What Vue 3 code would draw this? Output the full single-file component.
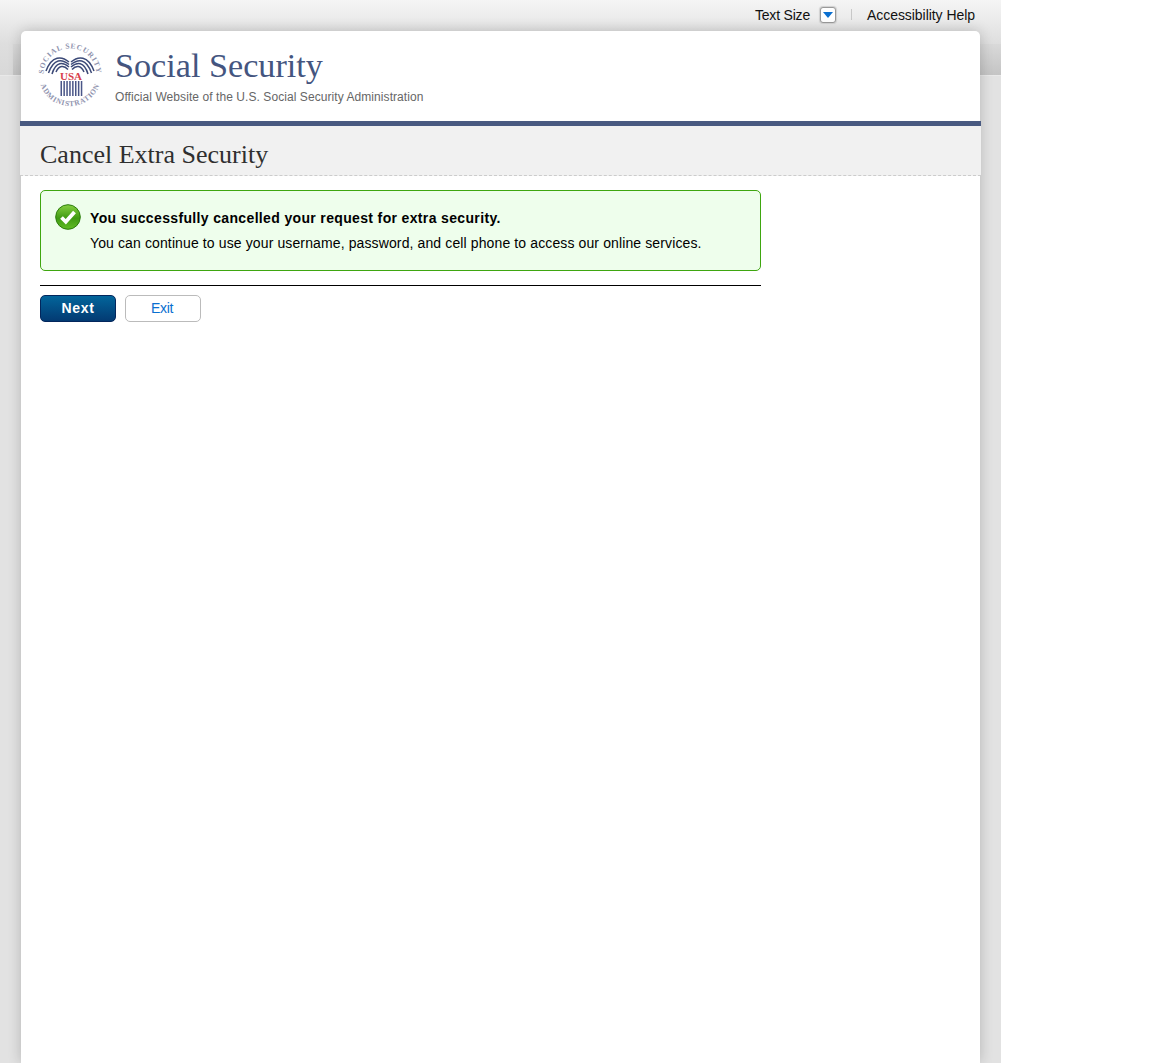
<script setup>
const stripes = [0, 1, 2, 3, 4, 5, 6, 7]
const feathers = [
  'M69 62C62 56 52 55 46 71',
  'M69 64.5C62 59 54 58 48.5 73',
  'M69 67C63 62 56 61 52 74',
  'M68 69.5C64 65 59 65 56 72'
]
</script>

<template>
  <div class="page">
    <div class="topbar">
      <span class="toplink size-label">Text Size</span>
      <span class="size-btn">
        <svg width="10" height="6" viewBox="0 0 10 6"><path d="M0 0H10L5 6Z" fill="#0a6fd0" /></svg>
      </span>
      <span class="sep"></span>
      <span class="toplink">Accessibility Help</span>
    </div>

    <div class="card">
      <header class="brand">
        <svg class="seal" width="62" height="62" viewBox="39 44 62 62">
          <defs>
            <path id="seal-top" d="M45.5 85A26.5 26.5 0 1 1 94.5 85" />
            <path id="seal-bottom" d="M40.7 65A31 31 0 1 0 99.3 65" />
          </defs>
          <text class="seal-text top"><textPath href="#seal-top" startOffset="50%" text-anchor="middle">SOCIAL SECURITY</textPath></text>
          <text class="seal-text"><textPath href="#seal-bottom" startOffset="50%" text-anchor="middle">ADMINISTRATION</textPath></text>
          <g fill="none" stroke="#3c4a78" stroke-width="1.5">
            <path v-for="d in feathers" :key="d" :d="d" />
            <path v-for="d in feathers" :key="'r' + d" :d="d" transform="matrix(-1 0 0 1 140 0)" />
          </g>
          <text x="71" y="79.5" class="seal-usa" text-anchor="middle">USA</text>
          <rect v-for="i in stripes" :key="i" :x="60.5 + i * 2.9" y="81" width="1.5" height="15" fill="#4a5688" />
        </svg>
        <div class="brand-text">
          <div class="brand-name">Social Security</div>
          <div class="brand-sub">Official Website of the U.S. Social Security Administration</div>
        </div>
      </header>

      <div class="title-bar">
        <h1>Cancel Extra Security</h1>
      </div>

      <main class="content">
        <div class="notice">
          <svg class="notice-icon" width="26" height="26" viewBox="0 0 26 26">
            <defs>
              <linearGradient id="ok-fill" x1="0" y1="0" x2="0" y2="1">
                <stop offset="0" stop-color="#86d040" />
                <stop offset="0.55" stop-color="#3f9a12" />
                <stop offset="1" stop-color="#62bd24" />
              </linearGradient>
            </defs>
            <circle cx="13" cy="13" r="12.3" fill="url(#ok-fill)" stroke="#2c7d0c" />
            <path d="M6.5 13.5L10.8 17.8L19.5 8" fill="none" stroke="#fff" stroke-width="3.8" />
          </svg>
          <div>
            <p class="notice-title">You successfully cancelled your request for extra security.</p>
            <p class="notice-body">You can continue to use your username, password, and cell phone to access our online services.</p>
          </div>
        </div>
        <div class="actions">
          <button class="btn-next" type="button">Next</button>
          <button class="btn-exit" type="button">Exit</button>
        </div>
      </main>
    </div>
  </div>
</template>

<style>
html, body {
  background: #fff;
  overflow: hidden;
}
</style>

<style scoped>
.page {
  width: 1001px;
  height: 1063px;
  overflow: hidden;
  font-family: "Liberation Sans", Arial, sans-serif;
  background:
    linear-gradient(#d9d9d9, #c4c4c4) 13px 44px / 988px 31px no-repeat,
    linear-gradient(#e9e9e9, #e9e9e9) 0 75px / 100% 1px no-repeat,
    linear-gradient(#f5f5f5, #dedede 44px, #d8d8d8 75px, #e2e2e2 76px, #e2e2e2) 0 0 / 100% 100% no-repeat;
}
.topbar {
  height: 31px;
  box-sizing: border-box;
  padding: 0 26px 2px 0;
  display: flex;
  align-items: center;
  justify-content: flex-end;
  font-size: 14px;
  letter-spacing: -0.05px;
  color: #111;
}
.size-label {
  letter-spacing: -0.2px;
}
.size-btn {
  width: 14px;
  height: 14px;
  margin-left: 10px;
  background: #fff;
  border: 1px solid #999;
  border-radius: 3px;
  box-shadow: 0 0 1px 1px #d0d0d0;
  display: flex;
  align-items: center;
  justify-content: center;
}
.sep {
  width: 1px;
  height: 11px;
  margin: 0 15px;
  background: #c8c8c8;
}
.card {
  position: relative;
  width: 959px;
  margin-left: 21px;
  height: 1032px;
  background: #fff;
  border-radius: 5px 5px 0 0;
  box-shadow: 0 0 14px rgba(0, 0, 0, 0.2);
}
.brand {
  height: 90px;
  box-sizing: border-box;
  padding: 13px 0 0 18px;
  display: flex;
  gap: 14px;
}
.seal {
  overflow: visible;
}
.seal-text {
  font: 700 7.5px "Liberation Serif", serif;
  fill: #8f93ae;
  letter-spacing: 0.7px;
}
.seal-text.top {
  letter-spacing: 0.8px;
}
.seal-usa {
  font: 700 11px "Liberation Serif", serif;
  fill: #d8404a;
}
.brand-name {
  margin-top: 2px;
  font: 34.2px/40px "Liberation Serif", serif;
  color: #44557f;
}
.brand-sub {
  margin-top: 4px;
  font-size: 12px;
  line-height: 14px;
  letter-spacing: 0.07px;
  color: #666;
}
.title-bar {
  margin: 0 -1px;
  height: 55px;
  box-sizing: border-box;
  border-top: 5px solid #495a81;
  border-bottom: 1px dashed #ccc;
  background: #f1f1f1;
  padding: 14px 0 0 20px;
}
h1 {
  margin: 0;
  font: 400 26px/30px "Liberation Serif", serif;
  color: #2f2f2f;
}
.content {
  width: 721px;
  margin: 14px 0 0 19px;
}
.notice {
  height: 81px;
  box-sizing: border-box;
  border: 1px solid #3ea60f;
  border-radius: 5px;
  background: #eefeec;
  padding: 13px 0 0 14px;
  display: flex;
  gap: 9px;
}
.notice p {
  margin: 0;
  color: #000;
  font-size: 14px;
  line-height: 18px;
}
.notice .notice-title {
  margin-top: 5px;
  font-weight: 700;
  letter-spacing: 0.35px;
}
.notice .notice-body {
  margin-top: 7px;
  letter-spacing: 0.12px;
}
.actions {
  margin-top: 14px;
  border-top: 1px solid #000;
  padding-top: 9px;
  display: flex;
  gap: 9px;
}
.actions button {
  width: 76px;
  height: 27px;
  padding: 0 0 2px;
  border-radius: 5px;
  font-family: inherit;
  font-size: 14px;
}
.btn-next {
  border: 1px solid #03265c;
  background: linear-gradient(#02659b, #033a72);
  color: #fff;
  font-weight: 700;
  letter-spacing: 0.7px;
}
.actions .btn-exit {
  border: 1px solid #bbb;
  background: #fff;
  color: #0a6fd0;
  padding-right: 2px;
  letter-spacing: -0.3px;
}
</style>
